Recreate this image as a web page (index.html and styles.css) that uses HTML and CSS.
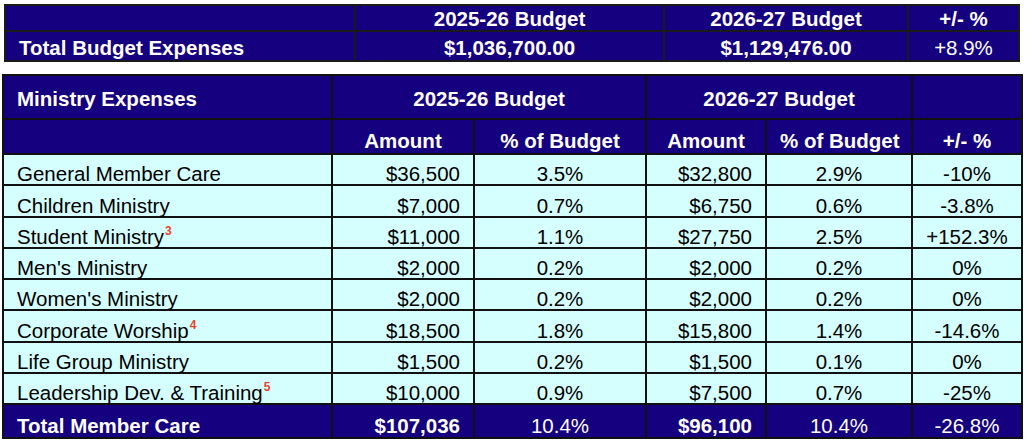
FILE: index.html
```html
<!DOCTYPE html>
<html>
<head>
<meta charset="utf-8">
<link rel="stylesheet" href="styles.css">
</head>
<body>
<table class="summary">
  <colgroup>
    <col class="s1"><col class="s2"><col class="s3"><col class="s4">
  </colgroup>
  <tr class="srow1">
    <td></td>
    <td class="c b">2025-26 Budget</td>
    <td class="c b">2026-27 Budget</td>
    <td class="c b">+/- %</td>
  </tr>
  <tr class="srow2">
    <td class="l b">Total Budget Expenses</td>
    <td class="c b">$1,036,700.00</td>
    <td class="c b">$1,129,476.00</td>
    <td class="c">+8.9%</td>
  </tr>
</table>

<table class="ministry">
  <colgroup>
    <col class="m1"><col class="m2"><col class="m3"><col class="m4"><col class="m5"><col class="m6">
  </colgroup>
  <tr class="hrow1">
    <td class="l b">Ministry Expenses</td>
    <td class="c b" colspan="2">2025-26 Budget</td>
    <td class="c b" colspan="2">2026-27 Budget</td>
    <td></td>
  </tr>
  <tr class="hrow2">
    <td></td>
    <td class="c b">Amount</td>
    <td class="c b">% of Budget</td>
    <td class="c b">Amount</td>
    <td class="c b">% of Budget</td>
    <td class="c b">+/- %</td>
  </tr>
  <tr class="drow">
    <td class="l">General Member Care</td>
    <td class="r">$36,500</td><td class="c">3.5%</td>
    <td class="r">$32,800</td><td class="c">2.9%</td><td class="c">-10%</td>
  </tr>
  <tr class="drow">
    <td class="l">Children Ministry</td>
    <td class="r">$7,000</td><td class="c">0.7%</td>
    <td class="r">$6,750</td><td class="c">0.6%</td><td class="c">-3.8%</td>
  </tr>
  <tr class="drow">
    <td class="l">Student Ministry<sup class="note">3</sup></td>
    <td class="r">$11,000</td><td class="c">1.1%</td>
    <td class="r">$27,750</td><td class="c">2.5%</td><td class="c">+152.3%</td>
  </tr>
  <tr class="drow">
    <td class="l">Men's Ministry</td>
    <td class="r">$2,000</td><td class="c">0.2%</td>
    <td class="r">$2,000</td><td class="c">0.2%</td><td class="c">0%</td>
  </tr>
  <tr class="drow">
    <td class="l">Women's Ministry</td>
    <td class="r">$2,000</td><td class="c">0.2%</td>
    <td class="r">$2,000</td><td class="c">0.2%</td><td class="c">0%</td>
  </tr>
  <tr class="drow">
    <td class="l">Corporate Worship<sup class="note">4</sup></td>
    <td class="r">$18,500</td><td class="c">1.8%</td>
    <td class="r">$15,800</td><td class="c">1.4%</td><td class="c">-14.6%</td>
  </tr>
  <tr class="drow">
    <td class="l">Life Group Ministry</td>
    <td class="r">$1,500</td><td class="c">0.2%</td>
    <td class="r">$1,500</td><td class="c">0.1%</td><td class="c">0%</td>
  </tr>
  <tr class="drow">
    <td class="l">Leadership Dev. &amp; Training<sup class="note">5</sup></td>
    <td class="r">$10,000</td><td class="c">0.9%</td>
    <td class="r">$7,500</td><td class="c">0.7%</td><td class="c">-25%</td>
  </tr>
  <tr class="trow">
    <td class="l b">Total Member Care</td>
    <td class="r b">$107,036</td><td class="c">10.4%</td>
    <td class="r b">$96,100</td><td class="c">10.4%</td><td class="c">-26.8%</td>
  </tr>
</table>
</body>
</html>
```

FILE: styles.css
```css
html, body {
  margin: 0;
  padding: 0;
  background: #ffffff;
}

body {
  font-family: "Liberation Sans", Arial, sans-serif;
  font-size: 20.5px;
  color: #000000;
}

table {
  border-collapse: collapse;
  table-layout: fixed;
}

td {
  box-sizing: border-box;
  border: 2px solid #111111;
  padding: 0 13px;
  line-height: 20px;
  vertical-align: bottom;
  white-space: nowrap;
  overflow: visible;
}

.l { text-align: left; }
.c { text-align: center; }
.r { text-align: right; }
.b { font-weight: bold; }

/* summary table */
.summary {
  margin: 4px 0 0 4px;
  width: 1016px;
  background: #15007f;
  color: #ffffff;
}
.summary td { border-color: #1a1a1a; }
.s1 { width: 350px; }
.s2 { width: 309px; }
.s3 { width: 244px; }
.s4 { width: 111px; }
.srow1 td { height: 26px; padding-bottom: 1px; }
.srow2 td { height: 30px; padding-bottom: 2px; }

/* ministry table */
.ministry {
  margin: 12px 0 0 2px;
  width: 1021px;
}
.m1 { width: 329px; }
.m2 { width: 142px; }
.m3 { width: 172px; }
.m4 { width: 120px; }
.m5 { width: 146px; }
.m6 { width: 110px; }

.hrow1 td, .hrow2 td, .trow td {
  background: #15007f;
  color: #ffffff;
}
.hrow1 td { height: 44px; padding-bottom: 9px; }
.hrow2 td { height: 35px; padding-bottom: 2px; }

.drow td {
  background: #d5fefe;
  height: 31.25px;
}

.trow td { height: 34px; padding-bottom: 1px; }

.note {
  color: #e8442a;
  font-weight: bold;
  font-size: 12px;
  line-height: 0;
  vertical-align: 9px;
  margin-left: 1px;
}
```
